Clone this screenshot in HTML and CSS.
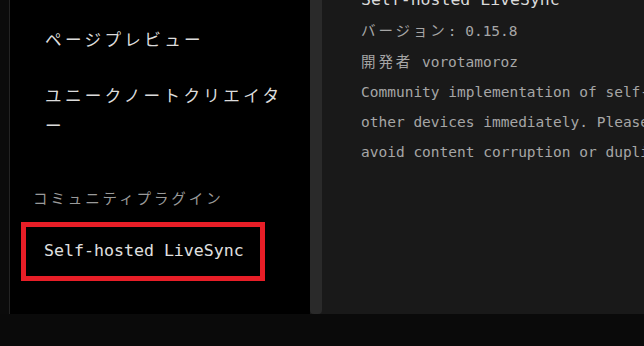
FILE: index.html
```html
<!DOCTYPE html>
<html lang="ja">
<head>
<meta charset="utf-8">
<link rel="stylesheet" href="styles.css">
</head>
<body>
<div class="app">
  <div class="main">
    <div class="gutter"></div>
    <nav class="sidebar">
      <div class="nav-item"><span class="cj">ページプレビュー</span></div>
      <div class="nav-item"><span class="cj">ユニークノートクリエイター</span></div>
      <div class="nav-heading"><span class="cj">コミュニティプラグイン</span></div>
      <div class="nav-item selected">Self-hosted LiveSync</div>
    </nav>
    <div class="scrollbar"><div class="thumb"></div></div>
    <section class="content">
      <div class="title">Self-hosted LiveSync</div>
      <div class="line"><span class="cj">バージョン</span>: 0.15.8</div>
      <div class="line"><span class="cj">開発者</span> vorotamoroz</div>
      <div class="line">Community implementation of self-hosted LiveSync. Reflect your vault changes to some</div>
      <div class="line">other devices immediately. Please make sure to disable other synchronize solutions to</div>
      <div class="line">avoid content corruption or duplication.</div>
    </section>
  </div>
  <div class="footer"></div>
</div>
</body>
</html>
```
FILE: styles.css
```css
* { box-sizing: border-box; }
html, body {
  margin: 0;
  padding: 0;
  background: #0a0a0a;
  width: 644px;
  height: 346px;
  overflow: hidden;
}
body {
  font-family: "DejaVu Sans Mono", "Noto Sans CJK JP", monospace;
}
.cj {
  font-family: "Noto Sans CJK JP", sans-serif;
  letter-spacing: 0.2em;
}
.app {
  display: flex;
  flex-direction: column;
  height: 346px;
}
.main {
  display: flex;
  height: 314px;
}
.gutter {
  width: 10px;
  flex: none;
  background: #0b0b0b;
  border-right: 1px solid #242424;
}
.sidebar {
  width: 300px;
  flex: none;
  background: #000;
  padding-top: 25px;
  font-size: 16.6px;
  color: #dcdcdc;
  overflow: hidden;
}
.nav-item {
  line-height: 28px;
  margin-left: 35px;
  margin-bottom: 26px;
  width: 250px;
}
.nav-heading {
  font-size: 14.5px;
  line-height: 20px;
  color: #9a9a9a;
  margin-left: 23px;
  margin-top: 47px;
  margin-bottom: 13px;
}
.nav-item.selected {
  margin-left: 11px;
  width: 244px;
  height: 59px;
  border: 5px solid #e81e27;
  padding: 10px 0 0 18px;
  line-height: 28px;
  color: #e0e0e0;
}
.scrollbar {
  width: 12px;
  flex: none;
  background: #1a1a1a;
}
.thumb {
  height: 100%;
  background: #2a2a2a;
  border-radius: 0 0 4px 4px;
}
.content {
  flex: 1;
  background: #191919;
  padding-left: 39px;
  overflow: hidden;
  white-space: nowrap;
  font-size: 14.5px;
  color: #a6a6a6;
}
.title {
  margin-top: -15px;
  line-height: 30px;
  font-size: 16.5px;
  color: #dadada;
}
.line {
  line-height: 30px;
}
.footer {
  height: 32px;
  background: #0a0a0a;
}
```
